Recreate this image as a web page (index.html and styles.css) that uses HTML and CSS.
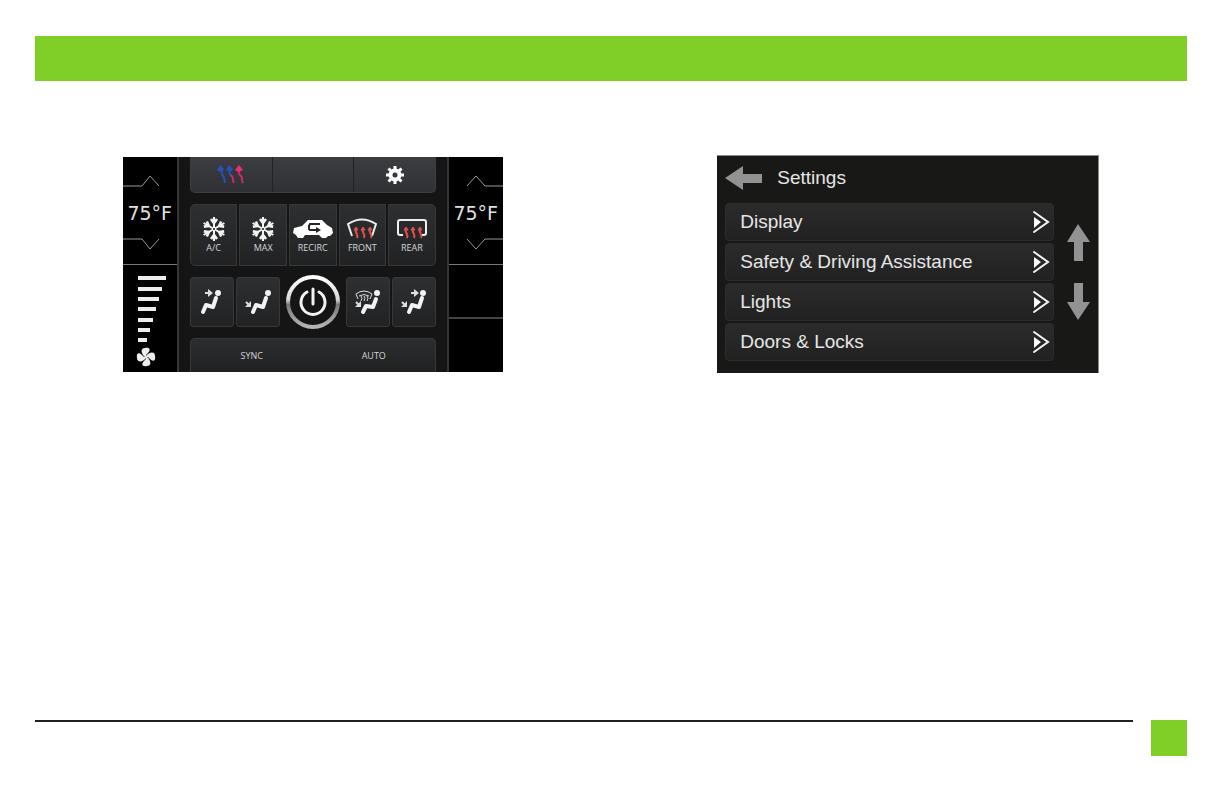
FILE: index.html
```html
<!DOCTYPE html>
<html lang="en">
<head>
    <meta charset="UTF-8">
    <meta name="viewport" content="width=device-width, initial-scale=1.0">
    <title>Climate and Settings</title>
    <link rel="stylesheet" href="styles.css">
</head>
<body>
    <header class="banner"></header>

    <main class="screens">
        <section class="climate" aria-label="Climate">
            <div class="side">
                <div class="temp">
                    <button aria-label="Driver temperature up"><svg width="54" height="14"><path d="M0 12h19l8-10 9 10"/></svg></button>
                    <span>75°F</span>
                    <button aria-label="Driver temperature down"><svg width="54" height="14"><path d="M0 2h19l8 10 9-10"/></svg></button>
                </div>
                <div class="fan">
                    <svg width="54" height="107" fill="#ededed">
                        <rect x="15" y="11" width="28" height="4"/>
                        <rect x="15" y="22" width="24" height="4"/>
                        <rect x="15" y="32" width="21" height="4"/>
                        <rect x="15" y="42" width="18" height="4"/>
                        <rect x="15" y="53" width="15" height="4"/>
                        <rect x="15" y="63" width="12" height="4"/>
                        <rect x="15" y="73" width="9" height="4"/>
                        <g transform="translate(23 92)">
                            <path id="blade" d="M-1 0c-4-3-5-9 0-9 5-1 6 2 3 5l-2 2v2z"/>
                            <use href="#blade" transform="rotate(90)"/>
                            <use href="#blade" transform="rotate(180)"/>
                            <use href="#blade" transform="rotate(270)"/>
                        </g>
                    </svg>
                </div>
            </div>

            <div class="center">
                <div class="top-bar">
                    <button aria-label="Heated and cooled seats">
                        <svg width="28" height="20" fill="none" stroke-width="2">
                            <g stroke="#2750b8"><path d="M4 4c2 3 0 5 2 7 2 2 1 4 2 7"/><path d="M12 4c1 3 0 5 2 7"/></g>
                            <g stroke="#d0286c"><path d="M14 10c3 2 1 5 3 8M22 5c-1 3 0 4 2 6 2 2 0 4 2 7"/></g>
                            <path d="M0 5l3-5 4 4-3 3zM9 5l3-5 4 4-3 3z" fill="#2750b8"/>
                            <path d="M18 5l4-5 4 5-4 2z" fill="#f02c75"/>
                        </svg>
                    </button>
                    <button aria-label="Rear"></button>
                    <button aria-label="Settings">
                        <svg width="20" height="20" viewBox="-10 -10 20 20" fill="none" stroke="#fff">
                            <circle r="4.5" stroke-width="4"/>
                            <path d="M0-6v-3M0 6v3M-6 0h-3M6 0h3M-4-4l-2.5-2.5M4-4l2.5-2.5M-4 4l-2.5 2.5M4 4l2.5 2.5" stroke-width="3"/>
                        </svg>
                    </button>
                </div>

                <div class="modes">
                    <button>
                        <svg width="26" height="26" viewBox="-13 -13 26 26" fill="none" stroke="#f4f4f4" stroke-width="2">
                            <g id="flake">
                                <g id="arm"><path d="M0-1v-11"/><path d="M-3-10l3 4 3-4" stroke-width="2.6"/></g>
                                <use href="#arm" transform="rotate(60)"/>
                                <use href="#arm" transform="rotate(120)"/>
                                <use href="#arm" transform="rotate(180)"/>
                                <use href="#arm" transform="rotate(240)"/>
                                <use href="#arm" transform="rotate(300)"/>
                            </g>
                        </svg>
                        A/C
                    </button>
                    <button>
                        <svg width="26" height="26" viewBox="-13 -13 26 26" fill="none" stroke="#f4f4f4" stroke-width="2"><use href="#flake"/></svg>
                        MAX
                    </button>
                    <button>
                        <svg width="42" height="26">
                            <path d="M1 17l1-5 8-2 6-6h14l5 5 5 3 1 5-3 3h-2l-2 2h-4l-3-3H13l-2 3H6l-2-3z" fill="#fff"/>
                            <path d="M28 8H18l-1 2v3l1 1h7" fill="none" stroke="#242628" stroke-width="2"/>
                            <path d="M24 11l5 3-5 3z" fill="#242628"/>
                        </svg>
                        RECIRC
                    </button>
                    <button>
                        <svg width="32" height="26" fill="none" stroke="#eee" stroke-width="2">
                            <path d="M6 20L2 8q14-9 28 0l-4 12"/>
                            <g id="heat" stroke="#e0504f"><path d="M10 13c-2 3 3 5 1 9M17 13c-2 3 3 5 1 9M24 13c-2 3 3 5 1 9"/><path d="M8 14l2-3 2 3zM15 14l2-3 2 3zM22 14l2-3 2 3z" fill="#e0504f" stroke-width="1"/></g>
                        </svg>
                        FRONT
                    </button>
                    <button>
                        <svg width="32" height="26" fill="none" stroke="#eee" stroke-width="2">
                            <path d="M7 19H4q-2 0-2-2V6q0-2 2-2h24q2 0 2 2v11q0 2-2 2h-2"/>
                            <use href="#heat"/>
                        </svg>
                        REAR
                    </button>
                </div>

                <div class="vents">
                    <button aria-label="Face vents">
                        <svg width="32" height="32">
                            <path class="body" d="M7 26l3-7 7 2 3-9"/>
                            <circle cx="22" cy="7" r="3"/>
                            <path class="arrow" d="M9 7h4"/><path class="head" d="M12 3l5 4-5 4z"/>
                        </svg>
                    </button>
                    <button aria-label="Floor vents">
                        <svg width="32" height="32">
                            <path class="body" d="M11 26l3-7 7 2 3-9"/>
                            <circle cx="26" cy="7" r="3"/>
                            <path class="arrow" d="M4 16l3 3"/><path class="head" d="M9 15v6H3z"/>
                        </svg>
                    </button>
                    <button class="power" aria-label="Power">
                        <svg width="54" height="54" viewBox="-27 -27 54 54" fill="none">
                            <defs>
                                <linearGradient id="ring" x2="0" y2="1">
                                    <stop offset="0" stop-color="#fff"/>
                                    <stop offset=".45" stop-color="#d8d8d8"/>
                                    <stop offset=".55" stop-color="#777"/>
                                    <stop offset="1" stop-color="#b5b5b5"/>
                                </linearGradient>
                            </defs>
                            <circle r="25" stroke="url(#ring)" stroke-width="4"/>
                            <path d="M-6-10a12 12 0 1 0 12 0M0-13V2" stroke="#f2f2f2" stroke-width="3" stroke-linecap="round"/>
                        </svg>
                    </button>
                    <button aria-label="Defrost and floor vents">
                        <svg width="32" height="32">
                            <path class="body" d="M11 26l3-6 7 1 3-8"/>
                            <circle cx="25" cy="7" r="3"/>
                            <path class="arrow thin" d="M6 13L4 8q8-6 16 0l-2 5M7 10q5-3 10 0M9 10q2 2 0 5M12 10q2 2 0 5M15 10q2 2 0 5"/>
                            <path class="arrow" d="M4 16l3 3"/><path class="head" d="M9 15v6H3z"/>
                        </svg>
                    </button>
                    <button aria-label="Face and floor vents">
                        <svg width="32" height="32">
                            <path class="body" d="M11 26l3-7 7 2 3-9"/>
                            <circle cx="25" cy="7" r="3"/>
                            <path class="arrow" d="M13 7h4M4 16l3 3"/><path class="head" d="M16 3l5 4-5 4zM9 15v6H3z"/>
                        </svg>
                    </button>
                </div>

                <div class="bottom-bar">
                    <button>SYNC</button>
                    <button>AUTO</button>
                </div>
            </div>

            <div class="side">
                <div class="temp">
                    <button aria-label="Passenger temperature up"><svg width="54" height="14"><path d="M18 12l9-10 9 10h18"/></svg></button>
                    <span>75°F</span>
                    <button aria-label="Passenger temperature down"><svg width="54" height="14"><path d="M18 2l9 10 9-10h18"/></svg></button>
                </div>
                <div class="slot"></div>
            </div>
        </section>

        <section class="settings">
            <div class="title">
                <button aria-label="Back"><svg width="38" height="24"><path d="M0 12L18 0v8h19v9H18v7z"/></svg></button>
                <h1>Settings</h1>
            </div>
            <div class="content">
                <nav class="menu">
                    <a href="#display">Display <svg width="18" height="24"><path d="M2 2l14 10L2 22"/><path class="tip" d="M2 7l7 5-7 6z"/></svg></a>
                    <a href="#safety">Safety &amp; Driving Assistance <svg width="18" height="24"><path d="M2 2l14 10L2 22"/><path class="tip" d="M2 7l7 5-7 6z"/></svg></a>
                    <a href="#lights">Lights <svg width="18" height="24"><path d="M2 2l14 10L2 22"/><path class="tip" d="M2 7l7 5-7 6z"/></svg></a>
                    <a href="#doors">Doors &amp; Locks <svg width="18" height="24"><path d="M2 2l14 10L2 22"/><path class="tip" d="M2 7l7 5-7 6z"/></svg></a>
                </nav>
                <div class="scroll">
                    <button aria-label="Scroll up"><svg width="23" height="37"><path d="M11 0l12 18h-7v19H7V18H0z"/></svg></button>
                    <button aria-label="Scroll down"><svg width="23" height="37"><path d="M11 37l12-18h-7V0H7v19H0z"/></svg></button>
                </div>
            </div>
        </section>
    </main>

    <footer>
        <hr>
        <div class="page-box"></div>
    </footer>
</body>
</html>
```
FILE: styles.css
```css
* {
    box-sizing: border-box;
}

body {
    display: flex;
    flex-direction: column;
    min-height: 100vh;
    margin: 0;
    padding: 36px 37px 36px 35px;
    background: #fff;
    font-family: "Liberation Sans", Arial, sans-serif;
}

button {
    padding: 0;
    border: 0;
    background: none;
    color: inherit;
    font: inherit;
    cursor: pointer;
}

svg {
    display: block;
}

.banner {
    height: 45px;
    background: #80cf28;
}

.screens {
    display: grid;
    grid-template-columns: 1fr 1fr;
    gap: 40px;
    flex: 1;
    align-items: start;
    justify-items: center;
    padding: 74px 1px 0 0;
}

/* climate screen */
.climate {
    display: grid;
    grid-template-columns: 54px 1fr 54px;
    width: 100%;
    max-width: 380px;
    margin-top: 2px;
    background: #000;
    overflow: hidden;
}

.side {
    display: flex;
    flex-direction: column;
    color: #e0e0e0;
}

.temp {
    display: flex;
    flex-direction: column;
    justify-content: space-between;
    height: 108px;
    padding: 17px 0 13px;
    border-bottom: 1px solid #777;
    font: 19px/22px "DejaVu Sans", sans-serif;
    text-align: center;
}

.temp path {
    fill: none;
    stroke: #999;
    stroke-width: 1;
}

.slot {
    height: 54px;
    border-bottom: 2px solid #444;
}

.center {
    display: flex;
    flex-direction: column;
    gap: 11px;
    padding: 0 11px;
    border: solid #333537;
    border-width: 0 2px;
    background: #151515;
    color: #d6d6d6;
    font: 9px/12px "Open Sans", sans-serif;
}

.center button {
    display: flex;
    align-items: center;
    justify-content: center;
}

.top-bar {
    display: grid;
    grid-template-columns: 1fr 1fr 1fr;
    height: 36px;
    border: 1px solid #3c3e41;
    border-top: 0;
    border-radius: 0 0 5px 5px;
    background: linear-gradient(#3b3d41, #2f3134);
}

.top-bar button + button {
    border-left: 1px solid #222;
}

.modes {
    display: grid;
    grid-template-columns: repeat(5, 1fr);
    gap: 2px;
    height: 62px;
}

.modes button {
    flex-direction: column;
    border: 1px solid #36383a;
    background: linear-gradient(#2d2f31, #202224);
}

.modes button:first-child {
    border-radius: 5px 0 0 5px;
}

.modes button:last-child {
    border-radius: 0 5px 5px 0;
}

.vents {
    display: grid;
    grid-template-columns: 44px 44px 1fr 44px 44px;
    gap: 2px;
    align-items: center;
    margin: -2px 0;
}

.vents button {
    height: 50px;
    border: 1px solid #36383a;
    border-radius: 3px;
    background: linear-gradient(#2d2f31, #202224);
}

.vents .power {
    height: 54px;
    border: 0;
    background: none;
}

.power svg {
    flex: none;
}

.vents circle {
    fill: #f2f2f2;
}

.vents .power circle {
    fill: none;
}

.body {
    fill: none;
    stroke: #f2f2f2;
    stroke-width: 4;
    stroke-linecap: round;
    stroke-linejoin: round;
}

.arrow {
    fill: none;
    stroke: #dedede;
    stroke-width: 2;
}

.thin {
    stroke-width: 1;
}

.head {
    fill: #dedede;
}

.bottom-bar {
    display: grid;
    grid-template-columns: 1fr 1fr;
    height: 34px;
    border: 1px solid #36383a;
    border-bottom: 0;
    border-radius: 5px 5px 0 0;
    background: linear-gradient(#2b2d2f, #1f2122);
}

/* settings screen */
.settings {
    width: 100%;
    max-width: 382px;
    padding: 9px 8px 12px;
    border: solid #8a8a88;
    border-width: 1px 1px 0 0;
    background: #181817;
    color: #e6e6e6;
    font-size: 19px;
}

.settings button path {
    fill: #929292;
}

.title {
    display: flex;
    align-items: center;
    gap: 14px;
    height: 26px;
    margin-bottom: 12px;
}

.title h1 {
    margin: 0;
    font-size: 19px;
    font-weight: normal;
}

.content {
    display: flex;
    gap: 12px;
}

.menu {
    display: flex;
    flex: 1;
    flex-direction: column;
    gap: 2px;
}

.menu a {
    display: flex;
    align-items: center;
    justify-content: space-between;
    height: 38px;
    padding: 0 3px 0 14px;
    border: 1px solid #2c2c2c;
    border-radius: 4px;
    background: linear-gradient(#2b2b2b, #212122);
    color: inherit;
    text-decoration: none;
}

.menu path {
    fill: none;
    stroke: #f4f4f4;
    stroke-width: 2;
    stroke-linecap: round;
}

.menu .tip {
    fill: #fff;
    stroke: none;
}

.scroll {
    display: flex;
    flex-direction: column;
    align-items: center;
    justify-content: center;
    gap: 22px;
    width: 24px;
    padding-bottom: 20px;
}

/* page footer */
footer {
    display: flex;
    align-items: flex-start;
    gap: 18px;
}

footer hr {
    flex: 1;
    height: 2px;
    margin: 0;
    border: 0;
    background: #231f20;
}

.page-box {
    width: 36px;
    height: 36px;
    background: #80cf28;
}
```
